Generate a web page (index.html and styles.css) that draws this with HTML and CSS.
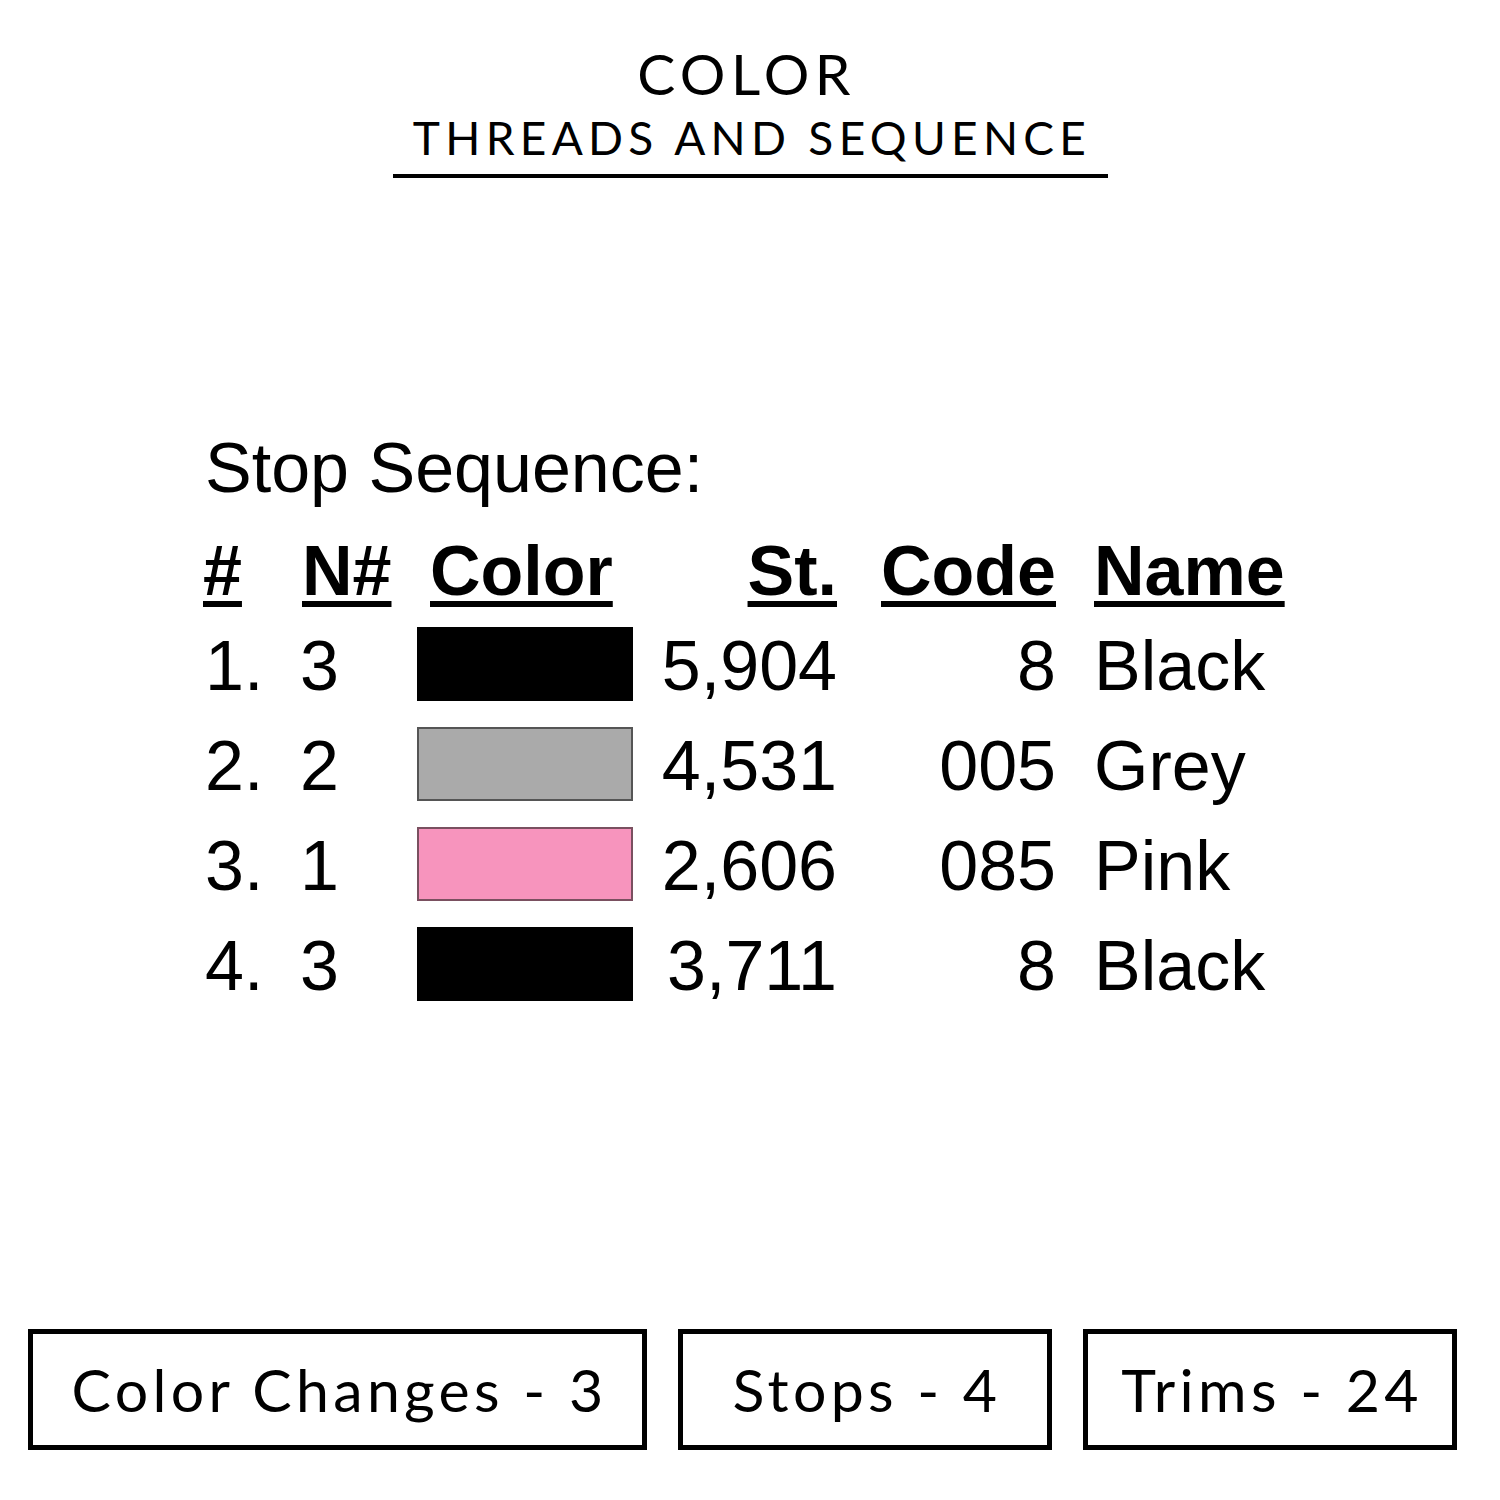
FILE: index.html
```html
<!DOCTYPE html>
<html lang="en">
<head>
<meta charset="utf-8">
<title>Color - Threads and Sequence</title>
<link rel="stylesheet" href="styles.css">
</head>
<body>
<main class="page">
  <header class="heading">
    <div class="heading-title">COLOR</div>
    <div class="heading-sub">THREADS AND SEQUENCE</div>
  </header>

  <section class="sequence">
    <div class="sequence-label">Stop Sequence:</div>
    <div class="seq-table">
      <div class="cell th c-num"><span class="u">#</span></div>
      <div class="cell th c-n"><span class="u">N#</span></div>
      <div class="cell th c-color"><span class="u">Color</span></div>
      <div class="cell th c-st"><span class="u">St.</span></div>
      <div class="cell th c-code"><span class="u">Code</span></div>
      <div class="cell th c-name"><span class="u">Name</span></div>

      <div class="cell c-num">1.</div>
      <div class="cell c-n">3</div>
      <div class="cell c-color"><span class="swatch swatch-black"></span></div>
      <div class="cell c-st">5,904</div>
      <div class="cell c-code">8</div>
      <div class="cell c-name">Black</div>

      <div class="cell c-num">2.</div>
      <div class="cell c-n">2</div>
      <div class="cell c-color"><span class="swatch swatch-grey"></span></div>
      <div class="cell c-st">4,531</div>
      <div class="cell c-code">005</div>
      <div class="cell c-name">Grey</div>

      <div class="cell c-num">3.</div>
      <div class="cell c-n">1</div>
      <div class="cell c-color"><span class="swatch swatch-pink"></span></div>
      <div class="cell c-st">2,606</div>
      <div class="cell c-code">085</div>
      <div class="cell c-name">Pink</div>

      <div class="cell c-num">4.</div>
      <div class="cell c-n">3</div>
      <div class="cell c-color"><span class="swatch swatch-black"></span></div>
      <div class="cell c-st">3,711</div>
      <div class="cell c-code">8</div>
      <div class="cell c-name">Black</div>
    </div>
  </section>

  <footer class="stats">
    <div class="stat stat-wide">Color Changes - 3</div>
    <div class="stat">Stops - 4</div>
    <div class="stat">Trims - 24</div>
  </footer>
</main>
</body>
</html>
```

FILE: styles.css
```css
html, body {
  margin: 0;
  padding: 0;
  background: #ffffff;
}

.page {
  width: 1500px;
  height: 1500px;
  display: flex;
  flex-direction: column;
  color: #000;
}

/* Heading */
.heading {
  width: 715px;
  margin: 0 auto;
  padding-top: 43px;
  border-bottom: 4px solid #000;
  padding-bottom: 6px;
  text-align: center;
  font-family: Lato, "Open Sans", sans-serif;
}

.heading-title {
  font-size: 57px;
  line-height: 60px;
  letter-spacing: 5.4px;
  margin-right: 7px;
}

.heading-sub {
  margin-top: 5px;
  font-size: 46px;
  line-height: 60px;
  letter-spacing: 5.3px;
  margin-left: 4px;
}

/* Sequence */
.sequence {
  margin-top: 250px;
  padding-left: 203px;
  font-family: "Liberation Sans", Arial, sans-serif;
  font-size: 70px;
}

.sequence-label {
  line-height: 80px;
  padding-left: 2px;
}

.seq-table {
  margin-top: 16px;
  display: grid;
  grid-template-columns: 97px 117px 216px 204px 219px auto;
  grid-template-rows: 92px;
  grid-auto-rows: 100px;
  line-height: 100px;
}

.cell {
  white-space: nowrap;
}

.th {
  font-weight: bold;
  line-height: 95px;
}

.u {
  text-decoration: underline;
  text-decoration-thickness: 6px;
  text-underline-offset: 6px;
}

.c-num { padding-left: 2px; }
.th.c-num { padding-left: 0; }
.th.c-n { padding-left: 2px; }
.th.c-color { padding-left: 13px; }
.c-st, .c-code { text-align: right; }
.c-name { padding-left: 38px; }

.swatch {
  display: block;
  box-sizing: border-box;
  width: 216px;
  height: 74px;
  margin-top: 11px;
}

.swatch-black {
  background: #000;
}

.swatch-grey {
  background: #aaaaaa;
  border: 2px solid #555;
}

.swatch-pink {
  background: #f794bd;
  border: 2px solid #7a5060;
}

/* Stats */
.stats {
  margin-top: auto;
  margin-bottom: 50px;
  padding-left: 28px;
  display: grid;
  grid-template-columns: 619px 374px 374px;
  column-gap: 31px;
  font-family: Lato, "Open Sans", sans-serif;
}

.stat {
  box-sizing: border-box;
  height: 121px;
  border: 5px solid #000;
  display: flex;
  align-items: center;
  justify-content: center;
  font-size: 59px;
  letter-spacing: 4.3px;
  padding-left: 4px;
}
```
